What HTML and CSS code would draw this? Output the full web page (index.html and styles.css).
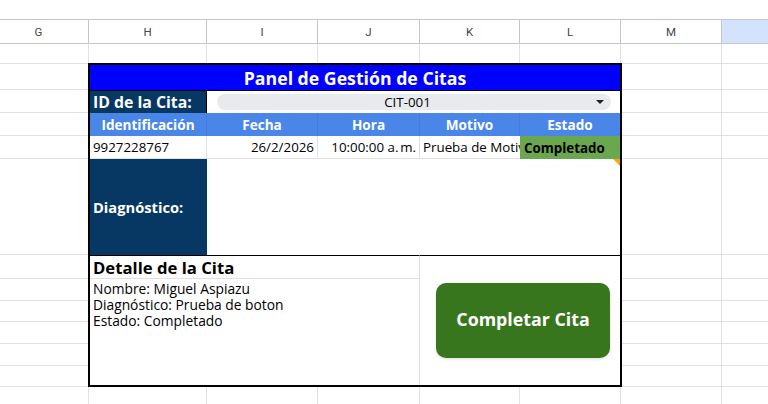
FILE: index.html
```html
<!DOCTYPE html>
<html lang="es">
<head>
<meta charset="utf-8">
<title>Panel de Gestión de Citas</title>
<link rel="stylesheet" href="styles.css">
</head>
<body>
<div class="toolbar"></div>
<div class="sheet">
  <div class="ch">G</div>
  <div class="ch">H</div>
  <div class="ch">I</div>
  <div class="ch">J</div>
  <div class="ch">K</div>
  <div class="ch">L</div>
  <div class="ch">M</div>
  <div class="ch ch-sel"></div>

  <div class="c"></div><div class="c"></div><div class="c"></div><div class="c"></div><div class="c"></div><div class="c"></div><div class="c"></div><div class="c"></div>
  <div class="c"></div><div class="c"></div><div class="c"></div>
  <div class="c"></div><div class="c"></div><div class="c"></div>
  <div class="c"></div><div class="c"></div><div class="c"></div>
  <div class="c"></div><div class="c"></div><div class="c"></div>
  <div class="c"></div><div class="c"></div><div class="c"></div>
  <div class="c"></div><div class="c"></div><div class="c"></div>
  <div class="c"></div><div class="c"></div><div class="c"></div>
  <div class="c"></div><div class="c"></div><div class="c"></div>
  <div class="c"></div><div class="c"></div><div class="c"></div>
  <div class="c"></div><div class="c"></div><div class="c"></div>
  <div class="c"></div><div class="c"></div><div class="c"></div>
  <div class="c"></div><div class="c"></div><div class="c"></div><div class="c"></div><div class="c"></div><div class="c"></div><div class="c"></div><div class="c"></div>

  <div class="panel">
    <div class="title">Panel de Gestión de Citas</div>

    <div class="id-label">ID de la Cita:</div>
    <div class="id-value">
      <div class="chip">
        <span class="chip-text">CIT-001</span>
        <svg class="chip-arrow" width="8" height="4" viewBox="0 0 8 4"><path d="M0 0H8L4 4Z" fill="#202124"/></svg>
      </div>
    </div>

    <div class="th">Identificación</div>
    <div class="th">Fecha</div>
    <div class="th">Hora</div>
    <div class="th">Motivo</div>
    <div class="th th-last">Estado</div>

    <div class="td">9927228767</div>
    <div class="td td-num">26/2/2026</div>
    <div class="td td-num">10:00:00 a.&#8239;m.</div>
    <div class="td td-clip">Prueba de Motivo</div>
    <div class="td td-status">Completado</div>

    <div class="diag-label">Diagnóstico:</div>
    <div class="diag-value"><span class="note"></span></div>

    <div class="detail-title">Detalle de la Cita</div>
    <div class="detail-action">
      <div class="btn">Completar Cita</div>
    </div>
    <div class="detail-body">
      <div>Nombre: Miguel Aspiazu</div>
      <div>Diagnóstico: Prueba de boton</div>
      <div>Estado: Completado</div>
    </div>
  </div>
</div>
</body>
</html>
```

FILE: styles.css
```css
html, body {
  margin: 0;
  padding: 0;
}
body {
  width: 768px;
  height: 404px;
  overflow: hidden;
  background: #ffffff;
  font-family: "Open Sans", "Noto Sans", sans-serif;
  color: #000;
}
.toolbar {
  height: 19px;
  background: #ffffff;
}
.sheet {
  display: grid;
  grid-template-columns: 100px 118px 111px 102px 100px 101px 101px 100px;
  grid-template-rows: 25px 20px 26px 23px 23px 23px 96px 24px 22px 21px 22px 22px 21px 21px;
  margin-left: -11px;
  width: 853px;
}
.ch {
  box-sizing: border-box;
  border-top: 1px solid #c4c7c5;
  border-bottom: 1px solid #c4c7c5;
  border-right: 1px solid #c4c7c5;
  display: flex;
  align-items: center;
  justify-content: center;
  font-family: Roboto, "Liberation Sans", sans-serif;
  font-size: 11.5px;
  color: #444746;
  background: #ffffff;
}
.ch-sel {
  background: #d3e3fd;
}
.c {
  box-sizing: border-box;
  border-right: 1px solid #e1e1e1;
  border-bottom: 1px solid #e1e1e1;
}
.panel {
  grid-column: 2 / 7;
  grid-row: 3 / 14;
  margin: -1px -1px 0 -1px;
  border: 2px solid #000;
  background: #ffffff;
  display: grid;
  grid-template-columns: 117px 111px 102px 100px 100px;
  grid-template-rows: 26px 22px 23px 23px 96px 24px 1fr;
}
.title {
  grid-column: 1 / -1;
  background: #0000ff;
  border-bottom: 1px solid #000;
  color: #fff;
  font-weight: 700;
  font-size: 17.7px;
  display: flex;
  align-items: center;
  justify-content: center;
}
.id-label {
  background: #073763;
  border-right: 1px solid #000;
  color: #fff;
  font-weight: 700;
  font-size: 15.8px;
  padding-left: 3px;
  display: flex;
  align-items: center;
  white-space: nowrap;
}
.id-value {
  grid-column: 2 / -1;
  display: flex;
  align-items: center;
  padding: 0 9px 0 10px;
}
.chip {
  flex: 1;
  height: 16px;
  border-radius: 8px;
  background: #e8eaed;
  display: flex;
  align-items: center;
  padding-left: 2px;
}
.chip-text {
  flex: 1;
  text-align: center;
  font-size: 13.33px;
  line-height: 16px;
}
.chip-arrow {
  margin-right: 7px;
  flex: none;
}
.th {
  background: #4a86e8;
  color: #fff;
  font-weight: 700;
  font-size: 13.6px;
  display: flex;
  align-items: center;
  justify-content: center;
  border-right: 1px solid rgba(0, 0, 0, 0.07);
}
.th-last {
  border-right: none;
}
.td {
  font-size: 13.33px;
  border-right: 1px solid #e1e1e1;
  border-bottom: 1px solid #e1e1e1;
  padding: 0 3px;
  display: flex;
  align-items: center;
  white-space: nowrap;
  overflow: hidden;
}
.td-num {
  justify-content: flex-end;
}
.td-clip {
  border-right: none;
}
.td-status {
  background: #6aa84f;
  font-weight: 700;
  border: none;
  padding-left: 4px;
}
.diag-label {
  background: #073763;
  color: #fff;
  font-weight: 700;
  font-size: 14.7px;
  padding-left: 3px;
  display: flex;
  align-items: center;
}
.diag-value {
  grid-column: 2 / -1;
  position: relative;
}
.note {
  position: absolute;
  top: 0;
  right: 0;
  width: 0;
  height: 0;
  border-top: 7px solid #f9ab00;
  border-left: 7px solid transparent;
}
.detail-title {
  grid-column: 1 / 4;
  border-top: 1px solid #000;
  border-bottom: 1px solid #e1e1e1;
  border-right: 1px solid #e1e1e1;
  font-weight: 700;
  font-size: 16.7px;
  padding-left: 3px;
  display: flex;
  align-items: center;
}
.detail-action {
  grid-column: 4 / 6;
  grid-row: 6 / 8;
  border-top: 1px solid #000;
  display: flex;
  align-items: center;
  padding-left: 16px;
}
.btn {
  width: 174px;
  height: 75px;
  box-sizing: border-box;
  padding-bottom: 4px;
  border-radius: 10px;
  background: #38761d;
  color: #fff;
  font-weight: 700;
  font-size: 17.8px;
  display: flex;
  align-items: center;
  justify-content: center;
  box-shadow: 0 1px 3px rgba(0, 0, 0, 0.15);
}
.detail-body {
  grid-column: 1 / 4;
  border-right: 1px solid #e1e1e1;
  padding: 2px 3px;
  font-size: 13.8px;
  line-height: 16px;
}
```
